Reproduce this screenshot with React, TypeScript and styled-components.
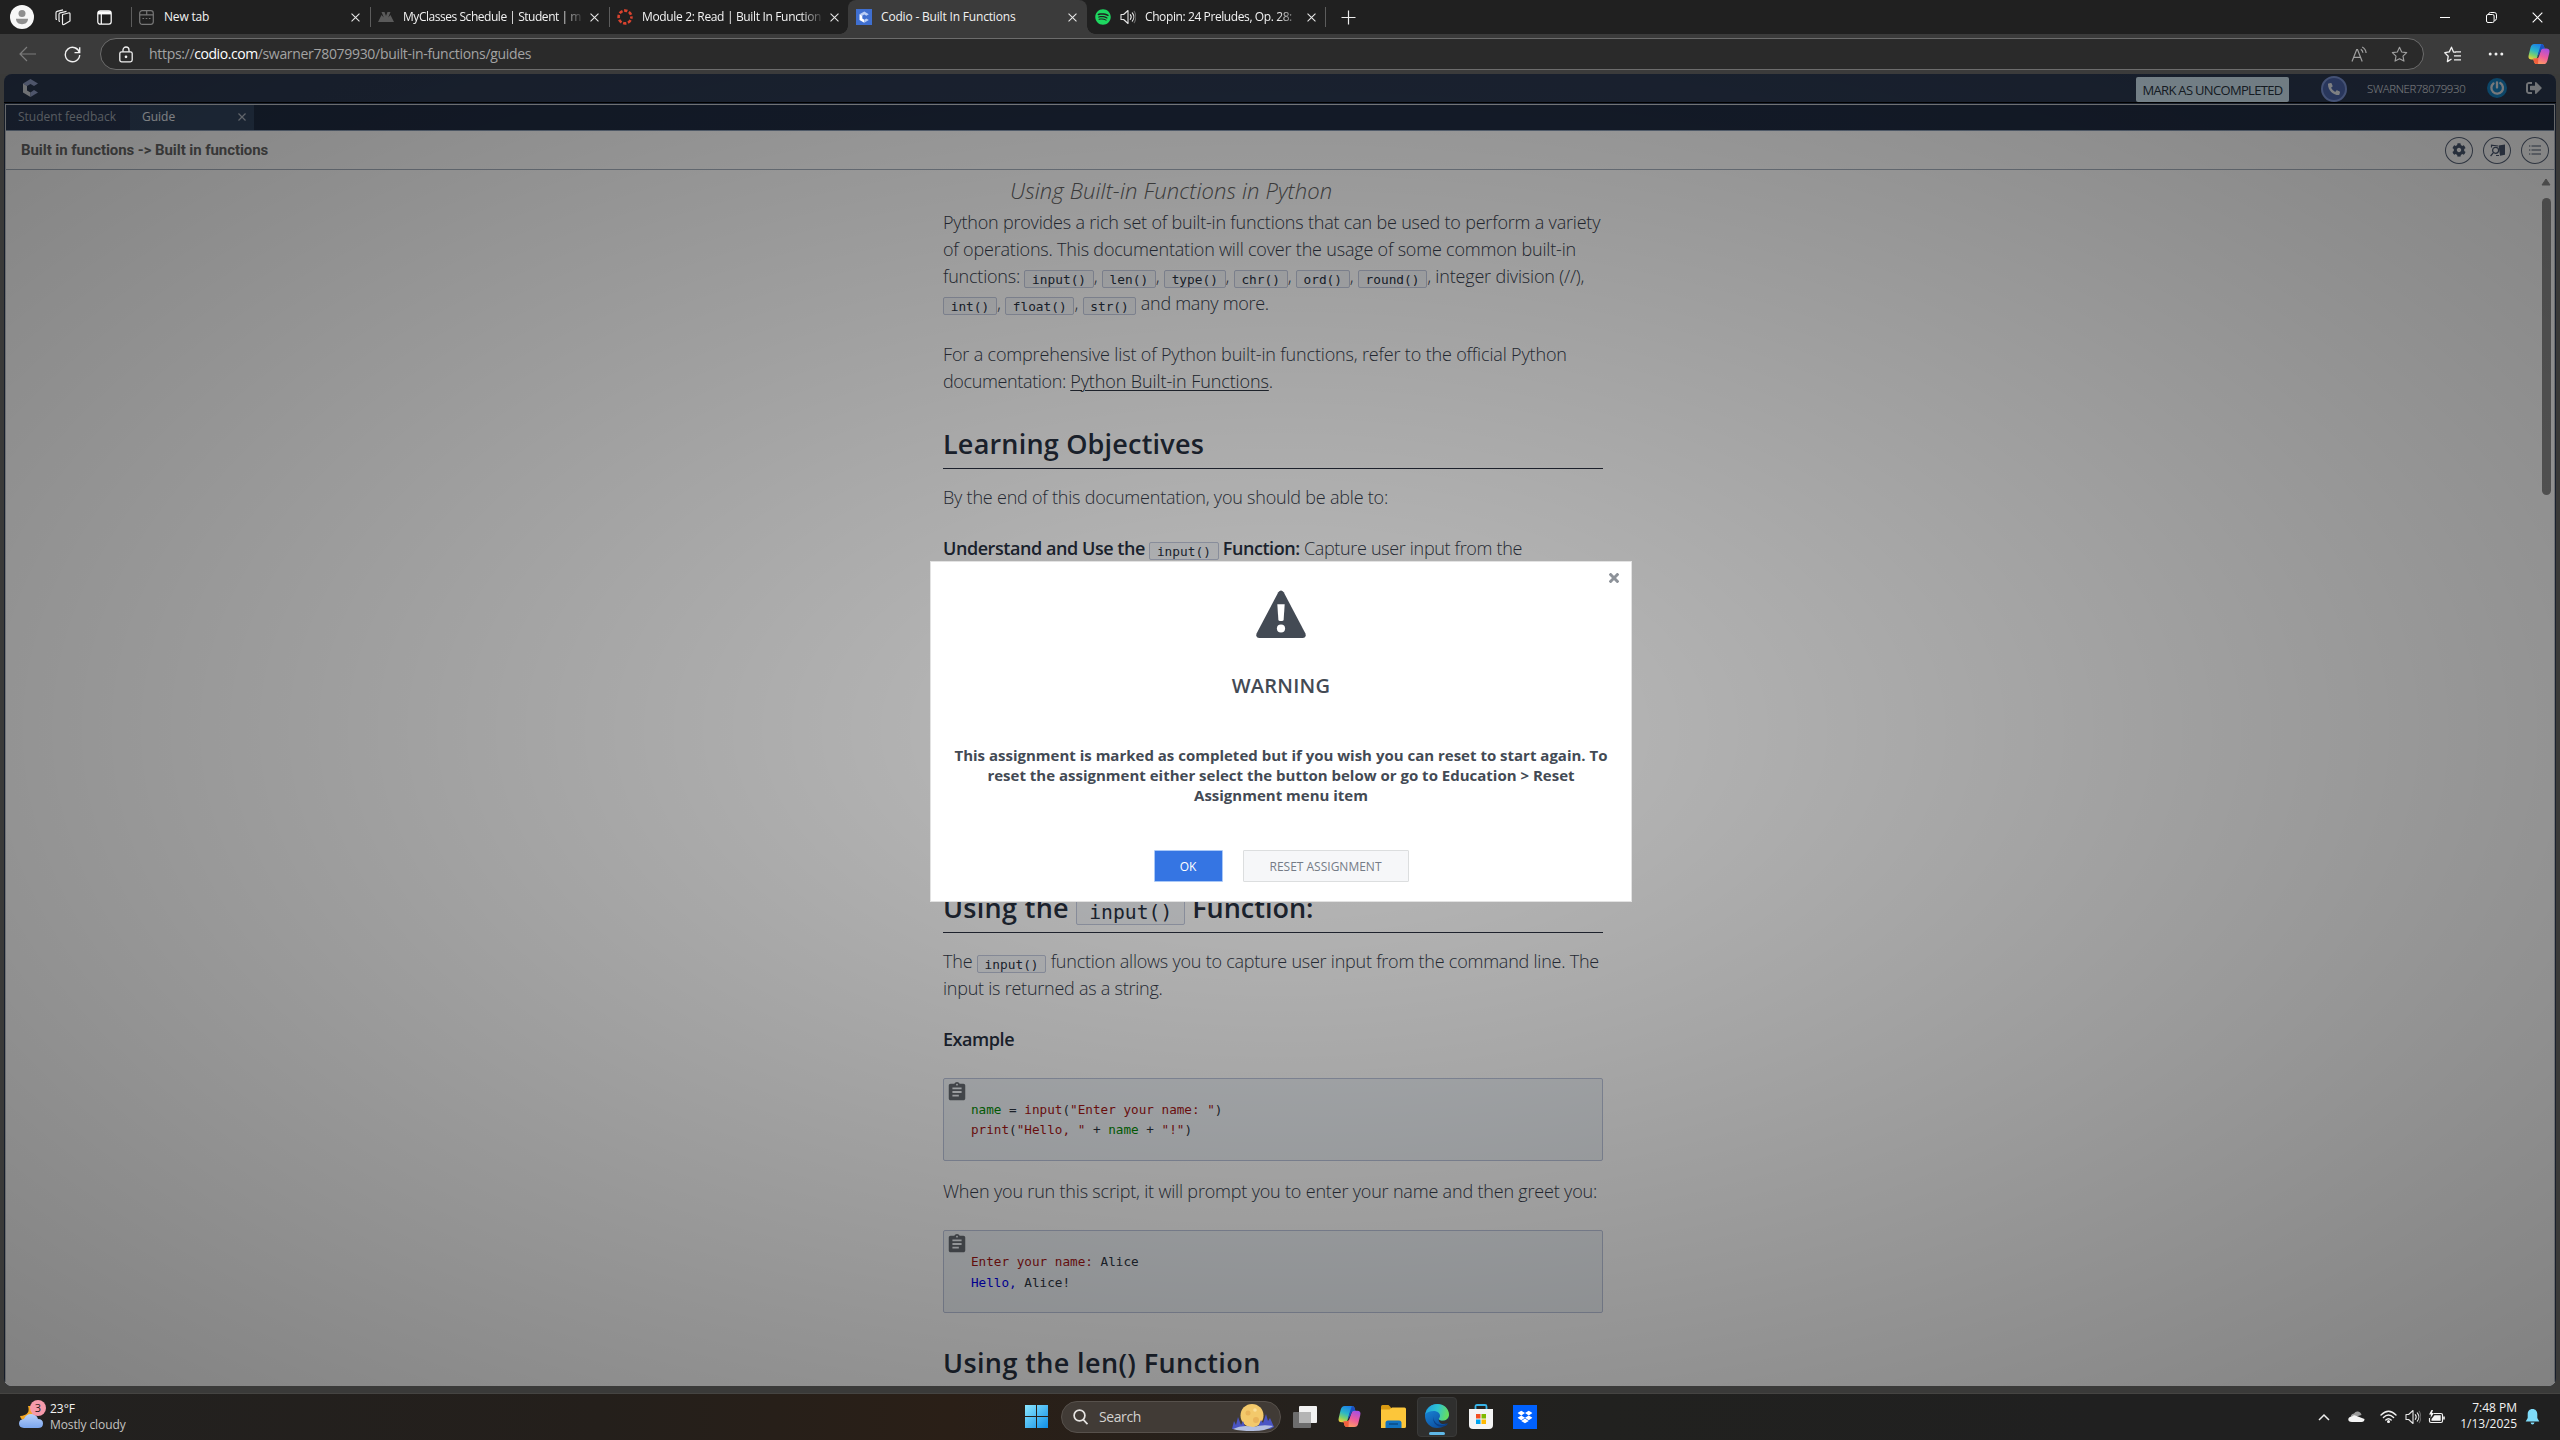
import React from "react";
import styled, { createGlobalStyle } from "styled-components";
import { FaSignOutAlt, FaCog, FaPhoneAlt, FaDropbox, FaSpotify } from "react-icons/fa";
import { MdAssignment } from "react-icons/md";

const SANS = `"Open Sans", "Noto Sans", sans-serif`;
const MONO = `"DejaVu Sans Mono", "Liberation Mono", monospace`;

const GlobalStyle = createGlobalStyle`
  *, *::before, *::after { box-sizing: border-box; }
  html, body { margin: 0; background: #3b3b3b; }
  body { font-family: ${SANS}; overflow: hidden; }
  svg { display: block; flex: none; }
`;

const Screen = styled.div`
  display: flex;
  flex-direction: column;
  width: 2560px;
  height: 1440px;
  overflow: hidden;
  background: #3a3a39;
`;

const Spaced = styled.span<{ $ls?: number }>`
  letter-spacing: ${(p) => p.$ls ?? 0}px;
`;

/* ---------- browser tab strip ---------- */

const TabStrip = styled.div`
  display: flex;
  flex: none;
  height: 34px;
  background: #202020;
  color: #f2f2f2;
`;

const StripStart = styled.div`
  display: flex;
  align-items: center;
  width: 131px;
  padding-left: 9px;
`;

const Avatar = styled.div`
  display: flex;
  margin-right: 19px;
`;

const StripIcon = styled.div<{ $gap: number }>`
  display: flex;
  margin-right: ${(p) => p.$gap}px;
`;

const BrowserTab = styled.div<{ $active?: boolean; $rule?: boolean }>`
  position: relative;
  display: flex;
  align-items: center;
  width: 239px;
  padding: 0 10px 0 8px;
  border-radius: 8px 8px 0 0;
  background: ${(p) => (p.$active ? "#3b3b3b" : "transparent")};
  font-size: 12px;

  &::before {
    content: "";
    position: absolute;
    left: ${(p) => (p.$active ? "-8px" : "0")};
    top: ${(p) => (p.$active ? "26px" : "7px")};
    width: ${(p) => (p.$active ? "8px" : "1px")};
    height: ${(p) => (p.$active ? "8px" : "20px")};
    background: ${(p) =>
      p.$active
        ? "radial-gradient(circle at 0 0, transparent 7.5px, #3b3b3b 8px)"
        : p.$rule
          ? "#5c5c5c"
          : "transparent"};
  }
  &::after {
    content: "";
    display: ${(p) => (p.$active ? "block" : "none")};
    position: absolute;
    right: -8px;
    top: 26px;
    width: 8px;
    height: 8px;
    background: radial-gradient(circle at 100% 0, transparent 7.5px, #3b3b3b 8px);
  }
`;

const TabIcon = styled.span`
  display: flex;
  width: 16px;
  margin-right: 9px;
`;

const TabTitle = styled.span<{ $fade?: boolean; $ls?: number }>`
  flex: 1;
  padding-bottom: 2px;
  letter-spacing: ${(p) => p.$ls ?? -0.18}px;
  white-space: nowrap;
  ${(p) =>
    p.$fade &&
    "-webkit-mask-image: linear-gradient(90deg, #000 calc(100% - 20px), rgba(0,0,0,.15) 100%);"}
`;

const TabClose = styled.span`
  display: flex;
  margin-left: 9px;
`;

const TabEnd = styled.div`
  display: flex;
  align-items: center;
  padding-left: 15px;
  margin-left: -1px;
`;

const EndRule = styled.i`
  width: 1px;
  height: 20px;
  margin: 0 15px 0 -15px;
  background: #5c5c5c;
`;

const WindowButtons = styled.div`
  display: flex;
  margin-left: auto;
`;

const WindowButton = styled.div`
  display: flex;
  align-items: center;
  justify-content: center;
  width: 46px;
`;

/* ---------- browser toolbar ---------- */

const Toolbar = styled.div`
  display: flex;
  flex: none;
  align-items: center;
  height: 40px;
  padding-left: 19px;
  background: #3b3b3b;
`;

const NavIcon = styled.div<{ $gap: number }>`
  display: flex;
  margin-right: ${(p) => p.$gap}px;
`;

const AddressBar = styled.div`
  display: flex;
  align-items: center;
  width: 2324px;
  height: 32px;
  margin-right: 7px;
  padding: 0 4px 0 18px;
  border: 1px solid #6c6c6c;
  border-radius: 16px;
  background: #2a2a2a;
`;

const Url = styled.div`
  flex: 1;
  margin-left: 16px;
  padding-bottom: 1px;
  color: #a3a3a3;
  font-size: 14px;
  letter-spacing: -0.31px;
  white-space: nowrap;

  b { color: #fff; font-weight: 500; letter-spacing: -0.45px; }
`;

const AddressIcon = styled.div`
  display: flex;
  justify-content: center;
  width: 40px;
`;

const ToolbarIcon = styled.div`
  display: flex;
  justify-content: center;
  width: 43px;
`;

/* ---------- page ---------- */

const PageFrame = styled.div`
  position: relative;
  display: flex;
  flex: none;
  flex-direction: column;
  width: 2552px;
  height: 1312px;
  margin: 0 4px;
  overflow: hidden;
  border-radius: 8px;
  background: #2b3850;
`;

const AppHeader = styled.div`
  display: flex;
  flex: none;
  align-items: center;
  height: 29px;
  padding: 0 14px 0 18px;
  border-bottom: 1px solid #000;
`;

const MarkButton = styled.div`
  height: 25px;
  width: 153px;
  margin: 3px 0 0 auto;
  border-radius: 2px;
  background: #d3e9f6;
  color: #26323e;
  font-size: 13px;
  letter-spacing: -0.68px;
  line-height: 26px;
  text-align: center;
`;

const CallBadge = styled.div`
  display: flex;
  align-items: center;
  justify-content: center;
  width: 26px;
  height: 26px;
  margin: 1px 0 0 32px;
  border: 2px solid #8099dc;
  border-radius: 50%;
  background: #4d67ae;
  color: #eef1f6;
`;

const UserName = styled.div`
  width: 101px;
  margin-left: 20px;
  color: #f2f5fa;
  font-size: 11.4px;
  font-weight: 350;
  letter-spacing: -0.33px;
  white-space: nowrap;
`;

const HeaderIcon = styled.div`
  display: flex;
  margin-left: 19px;
  color: #dde2e8;
`;

const Panel = styled.div`
  display: flex;
  flex: 1;
  flex-direction: column;
  margin: 1px 1px 0;
  border: solid #c4c8ce;
  border-width: 1px 1px 0;
  background: #fff;
`;

const PanelTabs = styled.div`
  display: flex;
  flex: none;
  height: 26px;
  border-bottom: 1px solid #8a9cb4;
  background: #202c42;
  font-size: 12px;
  line-height: 22px;
`;

const PanelTab = styled.div<{ $active?: boolean }>`
  display: flex;
  align-items: center;
  justify-content: space-between;
  width: 124px;
  padding: 0 8px 1px 12px;
  background: ${(p) => (p.$active ? "#32455f" : "#293650")};
  color: ${(p) => (p.$active ? "#eef2f7" : "#a8b0ba")};
  white-space: nowrap;
`;

const TitleBar = styled.div`
  display: flex;
  flex: none;
  align-items: center;
  height: 39px;
  padding: 0 5px 0 15px;
  border-bottom: 1px solid #a7b1be;
`;

const Crumb = styled.div`
  flex: 1;
  color: #666;
  font-family: Roboto, "Liberation Sans", sans-serif;
  font-size: 15px;
  font-weight: 700;
  letter-spacing: -0.07px;
`;

const RoundButton = styled.div`
  display: flex;
  align-items: center;
  justify-content: center;
  width: 28px;
  height: 27px;
  margin-left: 10px;
  border: 1px solid #59657a;
  border-radius: 50%;
  color: #4a5870;
`;

const Body = styled.div`
  display: flex;
  flex: 1;
  justify-content: space-between;
  min-height: 0;
  overflow: hidden;
`;

const Scrollbar = styled.div`
  display: flex;
  flex-direction: column;
  align-items: center;
  justify-content: space-between;
  width: 16px;
  padding: 8px 0;
`;

const ThumbTrack = styled.div`
  flex: 1;
  padding-top: 12px;
`;

const Thumb = styled.div`
  width: 9px;
  height: 297px;
  border-radius: 5px;
  background: #8c8c8c;
`;

/* ---------- guide document ---------- */

const Doc = styled.div`
  width: 660px;
  margin-left: 937px;
  padding-top: 5px;
  color: #353c4b;
  font-size: 18px;
  font-weight: 300;
  line-height: 27px;
  letter-spacing: -0.18px;
  white-space: nowrap;
`;

const DocTitle = styled.div`
  height: 34px;
  padding-left: 67px;
  color: #606060;
  font-size: 22px;
  font-style: italic;
  letter-spacing: 0.14px;
  line-height: 30px;
`;

const Para = styled.p<{ $after?: number }>`
  margin: 0 0 ${(p) => p.$after ?? 24}px;
`;

const Line = styled.span<{ $ls?: number }>`
  display: block;
  height: 27px;
  letter-spacing: ${(p) => p.$ls ?? -0.18}px;
`;

const Heading = styled.h2<{ $before?: number; $plain?: boolean }>`
  height: 43px;
  margin: ${(p) => p.$before ?? 31}px 0 15px;
  border-bottom: ${(p) => (p.$plain ? "0" : "1px")} solid #2a3040;
  color: #27303f;
  font-size: 27px;
  font-weight: 640;
  letter-spacing: 0.2px;
  line-height: 36px;
`;

const Strong = styled.strong`
  color: #27303f;
  font-weight: 650;
  letter-spacing: -0.44px;
`;

const Code = styled.code<{ $big?: boolean }>`
  padding: 0.5px ${(p) => (p.$big ? 12 : 6.7)}px;
  border: 1px solid #c3cade;
  border-radius: 2px;
  background: #f6f8fb;
  color: #27303f;
  font-family: ${MONO};
  font-size: ${(p) => (p.$big ? 19.7 : 12.8)}px;
  font-weight: 400;
  letter-spacing: 0;
  line-height: 1;
`;

const Comma = styled.span`
  letter-spacing: -0.2px;
`;

const DocLink = styled.a`
  color: #2c3340;
  letter-spacing: -0.1px;
  text-decoration: underline;
  text-decoration-thickness: 1px;
  text-underline-offset: 2px;
`;

const CodeBlock = styled.div<{ $after: number; $gap: number }>`
  display: flex;
  height: 83px;
  margin-bottom: ${(p) => p.$after}px;
  border: 1px solid #bcc5dc;
  border-radius: 2px;
  background: #f1f5f9;
  color: #2b3340;

  pre {
    margin: 21px 0 0 3px;
    font-family: ${MONO};
    font-size: 12.66px;
    font-weight: 400;
    letter-spacing: 0;
    line-height: ${(p) => p.$gap}px;
  }
`;

const CopyIcon = styled.div`
  display: flex;
  margin: 2px 0 0 2px;
  color: #666b72;
`;

const Tok = styled.span<{ $c: string }>`
  color: ${(p) => p.$c};
`;

/* ---------- modal ---------- */

const Backdrop = styled.div`
  position: absolute;
  inset: 0;
  display: flex;
  justify-content: center;
  align-items: flex-start;
  padding-top: 487px;
  background: radial-gradient(rgba(0, 0, 0, 0.255) 0%, rgba(0, 0, 0, 0.495) 100%);
`;

const Dialog = styled.div`
  display: flex;
  flex-direction: column;
  align-items: center;
  width: 702px;
  height: 341px;
  margin-left: 2px;
  border: 1px solid #e2e2e2;
  background: #fff;
  color: #434a54;
`;

const DialogClose = styled.div`
  display: flex;
  align-self: flex-end;
  height: 28px;
  padding: 11px 12px 0 0;
`;

const DialogTitle = styled.div`
  margin-top: 34px;
  font-size: 20px;
  font-weight: 540;
  letter-spacing: 0.25px;
  line-height: 28px;
`;

const DialogText = styled.div`
  margin-top: 45px;
  font-size: 15px;
  font-weight: 700;
  line-height: 20px;
  text-align: center;
  white-space: nowrap;
`;

const DialogActions = styled.div`
  display: flex;
  gap: 20px;
  margin-top: 45px;
`;

const DialogButton = styled.div<{ $primary?: boolean }>`
  width: ${(p) => (p.$primary ? 69 : 166)}px;
  height: 32px;
  border: 1px solid ${(p) => (p.$primary ? "#a9c8f7" : "#dcdedf")};
  border-radius: 1px;
  background: ${(p) => (p.$primary ? "#3575e3" : "#f6f7f9")};
  color: ${(p) => (p.$primary ? "#fff" : "#757c87")};
  font-size: 12px;
  line-height: 31px;
  text-align: center;
`;

/* ---------- taskbar ---------- */

const Taskbar = styled.div`
  display: flex;
  align-items: center;
  height: 47px;
  margin-top: auto;
  padding-bottom: 1px;
  border-top: 1px solid #454442;
  background: linear-gradient(90deg, #222120 0, #241f1b 600px, #2a1f17 950px, #25211d 1300px, #21211f 1600px, #202020 2100px);
  color: #f3f3f3;
  font-size: 12px;
`;

const Weather = styled.div`
  display: flex;
  align-items: center;
  width: 1025px;
  padding: 0 0 0 18px;
  line-height: 16px;
  small { display: block; color: #c4c2c0; font-size: 12px; letter-spacing: -0.1px; }
`;

const WeatherIcon = styled.div`
  display: flex;
  margin: 0 4px 4px 0;
`;

const SearchBox = styled.div`
  display: flex;
  align-items: center;
  width: 220px;
  height: 32px;
  margin: 0 4px 0 13px;
  padding: 0 6px 0 11px;
  border: 1px solid #57514c;
  border-radius: 16px;
  background: #413b36;
  color: #d4d2d0;
  font-size: 14px;
  letter-spacing: -0.4px;
  span { flex: 1; padding-left: 11px; }
`;

const TaskIcon = styled.div<{ $active?: boolean }>`
  display: flex;
  flex-direction: column;
  align-items: center;
  justify-content: center;
  width: 40px;
  height: 40px;
  margin-right: 4px;
  border: 1px solid ${(p) => (p.$active ? "#3a3a39" : "transparent")};
  border-radius: 4px;
  background: ${(p) => (p.$active ? "#2f2f2e" : "transparent")};
`;

const ActiveBar = styled.i`
  width: 16px;
  height: 3px;
  margin: 4px 0 -6px;
  border-radius: 2px;
  background: #5fb8e8;
`;

const Tray = styled.div`
  display: flex;
  align-items: center;
  margin-left: auto;
  padding-right: 20px;
`;

const TrayIcon = styled.div<{ $gap: number }>`
  display: flex;
  margin-right: ${(p) => p.$gap}px;
`;

const Clock = styled.div`
  width: 58px;
  margin: 0 8px 1px 0;
  line-height: 16px;
  text-align: right;
`;

/* ---------- drawings ---------- */

const Cross = ({ size = 9, color = "#e8e8e8", w = 1.2 }: { size?: number; color?: string; w?: number }) => (
  <svg width={size} height={size} viewBox="0 0 10 10" stroke={color} strokeWidth={w} fill="none">
    <path d="M.6.6l8.8 8.8M9.4.6L.6 9.4" />
  </svg>
);

const Copilot = ({ size, id }: { size: number; id: string }) => (
  <svg width={size} height={size} viewBox="0 0 24 24">
    <defs>
      <linearGradient id={`${id}a`} x1="0.6" y1="0" x2="0.2" y2="1">
        <stop offset="0" stopColor="#1c7fe8" />
        <stop offset=".45" stopColor="#2ab6c9" />
        <stop offset=".75" stopColor="#7fd06a" />
        <stop offset="1" stopColor="#f2d13a" />
      </linearGradient>
      <linearGradient id={`${id}b`} x1="0.7" y1="0" x2="0.3" y2="1">
        <stop offset="0" stopColor="#a94fe0" />
        <stop offset=".5" stopColor="#ee5c9c" />
        <stop offset="1" stopColor="#ffa25e" />
      </linearGradient>
    </defs>
    <path d="M7 1h7.500c2 0 2.600 1.200 3.200 3.400L18.300 7H15c-1.800 0-2.500.9-3.100 2.900L10.200 15c-.7 2.200-1.500 3-3.500 3H4c-3 0-4-1.600-3.200-4.800l2-8.200C3.500 2.300 4.600 1 7 1z" fill={`url(#${id}a)`} />
    <path d="M17 23H9.500c-2 0-2.600-1.200-3.200-3.400L5.700 17H9c1.800 0 2.500-.9 3.100-2.900L13.800 9c.7-2.200 1.500-3 3.500-3H20c3 0 4 1.600 3.200 4.800l-2 8.200c-.7 2.700-1.800 4-4.200 4z" fill={`url(#${id}b)`} />
    <path d="M14.500 1c2 0 2.600 1.200 3.200 3.400l.5 1.600h-1c-2 0-2.800.8-3.400 2.800L13 11l-3 4 2.500-8.500z" fill="#1d4fc0" />
    <path d="M9.500 23c-2 0-2.600-1.200-3.200-3.400L5.700 17H9c1 0 1.800-.4 2.300-1.200L11 23z" fill="#f0603c" />
  </svg>
);

const Star = ({ color, size = 18 }: { color: string; size?: number }) => (
  <svg width={size} height={size} viewBox="0 0 18 18" fill="none" stroke={color} strokeWidth="1.200" strokeLinejoin="round">
    <path d="M9 1.400l2.300 4.900 5.300.7-3.900 3.700 1 5.300L9 13.400 4.300 16l1-5.300L1.400 7l5.300-.7z" />
  </svg>
);

const CanvasRing = () => (
  <svg width="16" height="16" viewBox="0 0 16 16" fill="none" stroke="#d9432f" strokeWidth="2.600">
    <circle cx="8" cy="8" r="6.400" strokeDasharray="3.400 1.630" strokeDashoffset="1.700" />
  </svg>
);

const CodioMark = ({ w, h, top, side }: { w: number; h: number; top: string; side: string }) => (
  <svg width={w} height={h} viewBox="0 0 16 18">
    <path d="M1 4.500L8.500 0 16 4.500l-4 2.600-3.500-2L5 7z" fill={top} />
    <path d="M1 4.500L5 7v4.500l3.500 2V18L1 13.600z" fill={side} />
    <path d="M8.500 13.500L12 11l4 2.500L8.500 18z" fill={top} />
  </svg>
);

const Speaker = ({ size = 16 }: { size?: number }) => (
  <svg width={size} height={size} viewBox="0 0 16 16" fill="none" stroke="#e6e6e6" strokeWidth="1.100" strokeLinejoin="round" strokeLinecap="round">
    <path d="M1 5.500h2.600L8 1.500v13L3.600 10.500H1z" />
    <path d="M10.300 5.600c1.100 1.400 1.100 3.400 0 4.800M12.300 3.800c2 2.400 2 6 0 8.400" />
    <path d="M14.200 2.300c2 3.400 2 8 0 11.400" stroke="#666" />
  </svg>
);

export default function App() {
  const code = (t: string) => <Code>{t}</Code>;
  return (
    <Screen>
      <GlobalStyle />
      <TabStrip>
        <StripStart>
          <Avatar>
            <svg width="26" height="26" viewBox="0 0 26 26">
              <circle cx="13" cy="13" r="12" fill="#f7f7f7" />
              <circle cx="13" cy="9.500" r="3.500" fill="#8f8f8f" />
              <path d="M7 14.800h12c0 3.600-2.500 5.400-6 5.400s-6-1.800-6-5.400z" fill="#8f8f8f" />
            </svg>
          </Avatar>
          <StripIcon $gap={26}>
            <svg width="17" height="17" viewBox="0 0 17 17" fill="none" stroke="#ededed" strokeWidth="1.200" strokeLinejoin="round">
              <path d="M8.500 5.500l6-1.500q1.500-.3 1.500 1v7l-6 3.500q-1.500.5-1.500-1z" />
              <path d="M6 12.500q-1 0-1-1V5.300q0-1.100 1.100-1.400l6.400-1.600M3 10.500q-1 0-1-1V3.800q0-1.100 1.100-1.400L9 .8" />
            </svg>
          </StripIcon>
          <StripIcon $gap={0}>
            <svg width="15" height="15" viewBox="0 0 15 15" fill="none" stroke="#fff" strokeWidth="1.200">
              <rect x=".8" y=".8" width="13.400" height="13.400" rx="2.400" />
              <path d="M1 2.800h13" strokeWidth="3.200" />
              <path d="M4.300 4v10" />
            </svg>
          </StripIcon>
        </StripStart>

        <BrowserTab $rule>
          <TabIcon>
            <svg width="15" height="15" viewBox="0 0 15 15" fill="none" stroke="#777" strokeWidth="1.200">
              <rect x=".7" y=".7" width="13.600" height="13.600" rx="2.500" />
              <path d="M.7 4.800h7V.7M7.700 4.800h6.600" />
              <path d="M3.500 8.500h1.600M6.700 8.500h1.600M9.900 8.500h1.600" />
            </svg>
          </TabIcon>
          <TabTitle>New tab</TabTitle>
          <TabClose><Cross /></TabClose>
        </BrowserTab>
        <BrowserTab $rule>
          <TabIcon>
            <svg width="16" height="16" viewBox="0 0 16 16" fill="#5a5a5a">
              <path d="M0 13L3.500 6l2.300 2.500L3.500 3h3L8 7l1.500-4h3l-2.300 5.500L12.500 6 16 13z" />
            </svg>
          </TabIcon>
          <TabTitle $fade $ls={-0.46}>MyClasses Schedule | Student | m</TabTitle>
          <TabClose><Cross /></TabClose>
        </BrowserTab>
        <BrowserTab $rule>
          <TabIcon><CanvasRing /></TabIcon>
          <TabTitle $fade $ls={-0.34}>Module 2: Read | Built In Function</TabTitle>
          <TabClose><Cross /></TabClose>
        </BrowserTab>
        <BrowserTab $active>
          <TabIcon>
            <svg width="16" height="16" viewBox="0 0 16 16">
              <rect width="16" height="16" fill="#3f6fd0" />
              <path d="M3.500 5.200L8.300 2.400l4.500 2.800-2.500 1.600-2-1.200-2 1.200z" fill="#b9cdf5" />
              <path d="M3.500 5.200l2.800 1.600v2.700l2 1.200v3L3.500 11z" fill="#fff" />
              <path d="M8.300 10.700l2-1.200 2.500 1.600-4.500 2.600z" fill="#b9cdf5" />
            </svg>
          </TabIcon>
          <TabTitle>Codio - Built In Functions</TabTitle>
          <TabClose><Cross /></TabClose>
        </BrowserTab>
        <BrowserTab>
          <TabIcon><FaSpotify size={16} color="#1ed760" /></TabIcon>
          <TabIcon><Speaker /></TabIcon>
          <TabTitle $fade $ls={-0.4}>Chopin: 24 Preludes, Op. 28:</TabTitle>
          <TabClose><Cross /></TabClose>
        </BrowserTab>
        <TabEnd>
          <EndRule />
          <svg width="15" height="15" viewBox="0 0 15 15" stroke="#ededed" strokeWidth="1.200">
            <path d="M7.500.5v14M.5 7.500h14" />
          </svg>
        </TabEnd>
        <WindowButtons>
          <WindowButton>
            <svg width="10" height="10"><path d="M0 5.500h10" stroke="#fff" /></svg>
          </WindowButton>
          <WindowButton>
            <svg width="11" height="11" viewBox="0 0 11 11" fill="none" stroke="#fff">
              <rect x=".5" y="2.500" width="7.600" height="8" rx="1.500" />
              <path d="M2.500 2.300Q2.700.5 4.500.5h3.700q2.300 0 2.300 2.300v3.700q0 1.800-2 2" />
            </svg>
          </WindowButton>
          <WindowButton><Cross size={11} color="#fff" w={1} /></WindowButton>
        </WindowButtons>
      </TabStrip>

      <Toolbar>
        <NavIcon $gap={28}>
          <svg width="17" height="16" viewBox="0 0 17 16" fill="none" stroke="#7d7d7d" strokeWidth="1.200">
            <path d="M17 8H1M8 1L1 8l7 7" />
          </svg>
        </NavIcon>
        <NavIcon $gap={19}>
          <svg width="17" height="17" viewBox="0 0 17 17" fill="none" stroke="#f0f0f0" strokeWidth="1.400">
            <path d="M15.500 6.800A7.200 7.200 0 1 0 15.700 9M15.700 1.200v5.400h-5.200" />
          </svg>
        </NavIcon>
        <AddressBar>
          <svg width="14" height="17" viewBox="0 0 14 17" fill="none" stroke="#f0f0f0" strokeWidth="1.300">
            <rect x=".8" y="5.800" width="12.400" height="10" rx="1.800" />
            <path d="M4 5.800V4a3 3 0 0 1 6 0v1.800" />
            <circle cx="7" cy="10.800" r=".7" fill="#f0f0f0" />
          </svg>
          <Url>https://<b>codio.com</b>/swarner78079930/built-in-functions/guides</Url>
          <AddressIcon>
            <svg width="17" height="17" viewBox="0 0 17 17" fill="none" stroke="#a0a0a0" strokeWidth="1.200">
              <path d="M1 15.500L5.700 3.500h.8l4.700 12M2.700 11.300h6.800" />
              <path d="M9.800 3.200c1.300.9 2 2 2.100 3.600M11.200 1c2.400 1.300 3.700 3.300 3.900 6" />
            </svg>
          </AddressIcon>
          <AddressIcon><Star color="#a0a0a0" size={17} /></AddressIcon>
        </AddressBar>
        <ToolbarIcon>
          <svg width="18" height="17" viewBox="0 0 18 17" fill="none" stroke="#f0f0f0" strokeWidth="1.300" strokeLinejoin="round">
            <path d="M12 6.200L9.500 6 7.500 1.200 5.300 5.900.8 6.700l3.400 3.600-.8 5.300L7.500 13" />
            <path d="M11.500 5.800H17M10 9.800h7M10 13.800h7" />
          </svg>
        </ToolbarIcon>
        <ToolbarIcon>
          <svg width="16" height="4" fill="#f0f0f0">
            <circle cx="2.200" cy="2" r="1.500" /><circle cx="8" cy="2" r="1.500" /><circle cx="13.800" cy="2" r="1.500" />
          </svg>
        </ToolbarIcon>
        <ToolbarIcon><Copilot size={22} id="ct" /></ToolbarIcon>
      </Toolbar>

      <PageFrame>
        <AppHeader>
          <CodioMark w={16} h={18} top="#98a6d0" side="#d9dde2" />
          <MarkButton>MARK AS UNCOMPLETED</MarkButton>
          <CallBadge><FaPhoneAlt size={12} /></CallBadge>
          <UserName>SWARNER78079930</UserName>
          <HeaderIcon>
            <svg width="20" height="20" viewBox="0 0 20 20" fill="none" strokeLinecap="round">
              <circle cx="10" cy="10" r="10" fill="#1787c9" />
              <path d="M6.500 5.400a5.800 5.800 0 1 0 6.800-.4M10 4.300v5.200" stroke="#e6eaee" strokeWidth="2.300" />
            </svg>
          </HeaderIcon>
          <HeaderIcon><FaSignOutAlt size={16} /></HeaderIcon>
        </AppHeader>

        <Panel>
          <PanelTabs>
            <PanelTab>Student feedback</PanelTab>
            <PanelTab $active>Guide<Cross size={8} color="#b6bdc8" w={1.5} /></PanelTab>
          </PanelTabs>
          <TitleBar>
            <Crumb>Built in functions -&gt; Built in functions</Crumb>
            <RoundButton><FaCog size={14} /></RoundButton>
            <RoundButton>
              <svg width="15" height="13" viewBox="0 0 15 13" fill="none" stroke="currentColor" strokeWidth="1.200">
                <path d="M8.500 1.500L15 .6v10.200l-5 1z" fill="currentColor" stroke="none" />
                <path d="M1.500 3.500V1.200L8 2" />
                <circle cx="5.600" cy="6.300" r="3" fill="#fff" />
                <path d="M3.400 8.600L.6 12M6 11.500h3" />
              </svg>
            </RoundButton>
            <RoundButton>
              <svg width="12" height="10" viewBox="0 0 12 10" stroke="currentColor" fill="none">
                <path d="M0 1h1.300M2.500 1H12M0 5h1.300M2.500 5H12M0 9h1.300M2.500 9H12" />
              </svg>
            </RoundButton>
          </TitleBar>

          <Body>
            <Doc>
              <DocTitle>Using Built-in Functions in Python</DocTitle>
              <Para>
                <Line $ls={-0.195}>Python provides a rich set of built-in functions that can be used to perform a variety</Line>
                <Line $ls={-0.19}>of operations. This documentation will cover the usage of some common built-in</Line>
                <Line>
                  <Spaced $ls={-0.22}>functions: </Spaced>
                  {code("input()")}<Comma>, </Comma>{code("len()")}<Comma>, </Comma>{code("type()")}
                  <Comma>, </Comma>{code("chr()")}<Comma>, </Comma>{code("ord()")}<Comma>, </Comma>{code("round()")}
                  , integer division (//),
                </Line>
                <Line>
                  {code("int()")}<Comma>, </Comma>{code("float()")}<Comma>, </Comma>{code("str()")}
                  <Spaced $ls={-0.3}> and many more.</Spaced>
                </Line>
              </Para>
              <Para $after={0}>
                <Line $ls={-0.16}>For a comprehensive list of Python built-in functions, refer to the official Python</Line>
                <Line><Spaced $ls={-0.36}>documentation: </Spaced><DocLink>Python Built-in Functions</DocLink>.</Line>
              </Para>
              <Heading>Learning Objectives</Heading>
              <Para><Line $ls={-0.21}>By the end of this documentation, you should be able to:</Line></Para>
              <Para $after={0}>
                <Line>
                  <Strong>Understand and Use the </Strong>{code("input()")}<Strong> Function: </Strong>
                  <Spaced $ls={-0.33}>Capture user input from the</Spaced>
                </Line>
              </Para>

              <Heading $before={328}>
                <Spaced $ls={0.3}>Using the </Spaced><Code $big>input()</Code><Spaced $ls={-0.02}> Function:</Spaced>
              </Heading>
              <Para>
                <Line>The {code("input()")}<Spaced $ls={-0.23}> function allows you to capture user input from the command line. The</Spaced></Line>
                <Line $ls={-0.24}>input is returned as a string.</Line>
              </Para>
              <Para $after={25}><Strong>Example</Strong></Para>
              <CodeBlock $after={17} $gap={20}>
                <CopyIcon><MdAssignment size={22} /></CopyIcon>
                <pre>
                  <Tok $c="#048a04">name</Tok> = <Tok $c="#a31515">input</Tok>(<Tok $c="#a31515">"Enter your name: "</Tok>){"\n"}
                  <Tok $c="#a31515">print</Tok>(<Tok $c="#a31515">"Hello, "</Tok> + <Tok $c="#048a04">name</Tok> + <Tok $c="#a31515">"!"</Tok>)
                </pre>
              </CodeBlock>
              <Para $after={25}><Line $ls={-0.185}>When you run this script, it will prompt you to enter your name and then greet you:</Line></Para>
              <CodeBlock $after={32} $gap={20.5}>
                <CopyIcon><MdAssignment size={22} /></CopyIcon>
                <pre>
                  <Tok $c="#a31515">Enter your name:</Tok> Alice{"\n"}
                  <Tok $c="#0000ee">Hello,</Tok> Alice!
                </pre>
              </CodeBlock>
              <Heading $before={0} $plain><Spaced $ls={0.38}>Using the len() Function</Spaced></Heading>
            </Doc>
            <Scrollbar>
              <svg width="10" height="8" viewBox="0 0 10 8" fill="#8c8c8c" stroke="#8c8c8c" strokeLinejoin="round">
                <path d="M5 1L9 7H1z" />
              </svg>
              <ThumbTrack><Thumb /></ThumbTrack>
              <svg width="10" height="8" viewBox="0 0 10 8" fill="#7c7c7c" stroke="#7c7c7c" strokeLinejoin="round">
                <path d="M5 7L1 1h8z" />
              </svg>
            </Scrollbar>
          </Body>
        </Panel>

        <Backdrop>
          <Dialog>
            <DialogClose><Cross size={10} color="#8d9299" w={3} /></DialogClose>
            <svg width="50" height="48" viewBox="0 0 50 48">
              <path d="M22.300 2.200Q25-1.200 27.700 2.200L49.300 43.200Q50.800 47.600 46.600 48H3.400Q-.8 47.600.7 43.200z" fill="#434a54" />
              <path d="M21.300 14.200h7.400l-1.100 16q-2.600 1.800-5.200 0z" fill="#fff" />
              <circle cx="25" cy="38.500" r="4.100" fill="#fff" />
            </svg>
            <DialogTitle>WARNING</DialogTitle>
            <DialogText>
              This assignment is marked as completed but if you wish you can reset to start again. To<br />
              reset the assignment either select the button below or go to Education &gt; Reset<br />
              Assignment menu item
            </DialogText>
            <DialogActions>
              <DialogButton $primary>OK</DialogButton>
              <DialogButton>RESET ASSIGNMENT</DialogButton>
            </DialogActions>
          </Dialog>
        </Backdrop>
      </PageFrame>

      <Taskbar>
        <Weather>
          <WeatherIcon>
            <svg width="28" height="30" viewBox="0 0 28 30">
              <defs>
                <linearGradient id="cloud" x1="0" y1="0" x2="0" y2="1">
                  <stop offset="0" stopColor="#b9d2fb" />
                  <stop offset="1" stopColor="#7ba6ee" />
                </linearGradient>
              </defs>
              <path d="M10 6q3 9-8 10 1 5 7 5l8-6V6z" fill="#f4a723" />
              <path d="M6 28q-5-.3-5-4.500T6 19q2-5 7-5 5.500 0 7 5 5 0 5 4.500T20 28z" fill="url(#cloud)" />
              <circle cx="20" cy="8" r="8" fill="#f59aab" />
              <text x="20" y="12" fontSize="11" textAnchor="middle" fill="#2a1a1c" fontFamily="Open Sans">3</text>
            </svg>
          </WeatherIcon>
          <div>23°F<small>Mostly cloudy</small></div>
        </Weather>
        <svg width="23" height="23" viewBox="0 0 23 23">
          <defs>
            <linearGradient id="win" x1="0" y1="0" x2="1" y2="1">
              <stop offset="0" stopColor="#8be6ff" />
              <stop offset="1" stopColor="#0f8fe8" />
            </linearGradient>
          </defs>
          <path d="M0 0h11v11H0zM12 0h11v11H12zM0 12h11v11H0zM12 12h11v11H12z" fill="url(#win)" />
        </svg>
        <SearchBox>
          <svg width="15" height="16" viewBox="0 0 15 16" fill="none" stroke="#e6e4e2" strokeWidth="1.700">
            <circle cx="6.500" cy="6.500" r="5.400" /><path d="M10.300 10.600l4.200 4.600" />
          </svg>
          <span>Search</span>
          <svg width="42" height="28" viewBox="0 0 42 28">
            <circle cx="20" cy="12.500" r="11.500" fill="#f3c96b" />
            <circle cx="16" cy="10" r="2.500" fill="#e9b45a" />
            <circle cx="24" cy="17" r="3" fill="#e9b45a" />
            <circle cx="23" cy="7" r="1.800" fill="#fbe09a" />
            <path d="M0 26l2-8 2 4 2-8 3 8 2-4 3 8zM26 24l3-7 2 3 3-9 2 7 2-3 4 9-4 2z" fill="#4a55c4" />
            <path d="M1 26q10-5 20-2 10-3 20-1-6 5-20 5-14 0-20-2z" fill="#b4bfe0" />
          </svg>
        </SearchBox>
        <TaskIcon>
          <svg width="24" height="24" viewBox="0 0 24 24">
            <rect x="6" y="1" width="18" height="17" rx="1" fill="#f2f2f2" />
            <rect x="0" y="7" width="18" height="16" rx="1" fill="#6d6d6d" />
            <rect x="6" y="7" width="12" height="11" fill="#b4b4b4" />
          </svg>
        </TaskIcon>
        <TaskIcon><Copilot size={23} id="cb" /></TaskIcon>
        <TaskIcon>
          <svg width="25" height="23" viewBox="0 0 25 23">
            <path d="M0 1.500Q0 0 1.500 0h6L10 2.500V5H0z" fill="#d99a12" />
            <path d="M0 4.500h8.500L11 2.500h12.500q1.500 0 1.500 1.500v17.500q0 1.500-1.500 1.500H0z" fill="#fcc63a" />
            <path d="M4.500 23v-5q0-2.500 2.500-2.500h11q2.500 0 2.500 2.500v5z" fill="#1172c0" />
            <path d="M8 19h9" stroke="#0a4b86" strokeWidth="1.500" />
          </svg>
        </TaskIcon>
        <TaskIcon $active>
          <svg width="24" height="24" viewBox="0 0 24 24">
            <defs>
              <linearGradient id="edgeTop" x1="0" y1="0.300" x2="1" y2="0.500">
                <stop offset="0" stopColor="#1f9fe0" />
                <stop offset=".5" stopColor="#2fc4cf" />
                <stop offset="1" stopColor="#6ade58" />
              </linearGradient>
              <linearGradient id="edgeLow" x1="0" y1="0" x2="0.600" y2="1">
                <stop offset="0" stopColor="#1b8fe0" />
                <stop offset="1" stopColor="#0c4fa0" />
              </linearGradient>
            </defs>
            <circle cx="12" cy="12" r="12" fill="url(#edgeLow)" />
            <path d="M.3 10.500C1.500 4 6.500 0 12.300 0 19 0 24 4.800 24 10.500c0 4-3 6.300-6.200 6.300-2.600 0-4-.9-4-1.800 0-.8 1.200-1.300 1.200-3.300 0-2.500-2.700-4.700-6.300-4.700C4.800 7 1.700 8.300.3 10.500z" fill="url(#edgeTop)" />
            <path d="M8.500 12.500c-.5 5 3.500 9 9 8.500 2-.2 3.600-.9 4.600-1.600.4-.3.800.1.500.5-.5.8-1 1.300-1.600 1.900C15 24.500 7 21.500 8.500 12.500z" fill="#0b3f86" />
            <path d="M24 12c-.6 3-3 4.800-6.200 4.800-2.600 0-4-.9-4-1.800-.6 3 2 5.200 5 5 2-.1 3.400-.7 4.300-1.400z" fill="#2f2f2e" />
          </svg>
          <ActiveBar />
        </TaskIcon>
        <TaskIcon>
          <svg width="24" height="25" viewBox="0 0 24 25">
            <path d="M6.500 6V2.500Q6.500 1 8 1h8q1.500 0 1.500 1.500V6" fill="none" stroke="#38b4e8" strokeWidth="1.800" />
            <path d="M0 5h24v16q0 4-4 4H4q-4 0-4-4z" fill="#f4f4f4" />
            <path d="M7 10h4.500v4.500H7z" fill="#f25022" />
            <path d="M12.500 10H17v4.500h-4.500z" fill="#7fba00" />
            <path d="M7 15.500h4.500V20H7z" fill="#00a4ef" />
            <path d="M12.500 15.500H17V20h-4.500z" fill="#ffb900" />
          </svg>
        </TaskIcon>
        <TaskIcon>
          <svg width="24" height="24" viewBox="0 0 24 24">
            <rect width="24" height="24" fill="#0061fe" />
            <g transform="translate(4.500 4.500)"><FaDropbox size={15} color="#fff" /></g>
          </svg>
        </TaskIcon>
        <Tray>
          <TrayIcon $gap={18}>
            <svg width="12" height="8" fill="none" stroke="#ededed" strokeWidth="1.500"><path d="M1 7l5-5 5 5" /></svg>
          </TrayIcon>
          <TrayIcon $gap={15}>
            <svg width="17" height="11" viewBox="0 0 17 11">
              <path d="M3 7Q2 3 6 2.500 7.500 0 10 .5 13 1 13.500 4z" fill="#9a9a9a" />
              <path d="M4 11Q0 11 .3 8 .8 5.500 4 5.500 6 3.500 8 4.800L16.500 8Q16.500 11 13.500 11z" fill="#f4f4f4" />
            </svg>
          </TrayIcon>
          <TrayIcon $gap={8}>
            <svg width="17" height="13" viewBox="0 0 17 13" fill="none" stroke="#f0f0f0" strokeWidth="1.400" strokeLinecap="round">
              <path d="M1 5q7.500-7.500 15 0M3.400 7.600q5.100-5 10.200 0M5.800 10q2.700-2.600 5.400 0" />
              <circle cx="8.500" cy="11.600" r=".8" fill="#f0f0f0" />
            </svg>
          </TrayIcon>
          <TrayIcon $gap={7}><Speaker size={16} /></TrayIcon>
          <TrayIcon $gap={14}>
            <svg width="17" height="14" viewBox="0 0 17 14" fill="none" stroke="#f4f4f4" strokeWidth="1.200">
              <path d="M6 3.500h7q1.500 0 1.500 1.500v6q0 1.500-1.500 1.500H3q-1.500 0-1.500-1.500V8" />
              <path d="M6.500 5.300h6.200v5.400H3.500V9z" fill="#f4f4f4" stroke="none" />
              <path d="M16 6.500v3" strokeWidth="1.600" />
              <path d="M3.500 0L1 4.500h2L2.500 8l3.500-5H4l1-3z" fill="#f4f4f4" stroke="none" />
            </svg>
          </TrayIcon>
          <Clock>7:48 PM<br />1/13/2025</Clock>
          <svg width="15" height="16" viewBox="0 0 15 16" fill="#7fdcfa">
            <path d="M7.500 0c3 0 4.800 2.200 4.800 5v4l2 3.500H.7l2-3.500V5c0-2.800 1.800-5 4.800-5zM5.500 13.600h4q-.4 1.900-2 1.900t-2-1.900z" />
          </svg>
        </Tray>
      </Taskbar>
    </Screen>
  );
}
